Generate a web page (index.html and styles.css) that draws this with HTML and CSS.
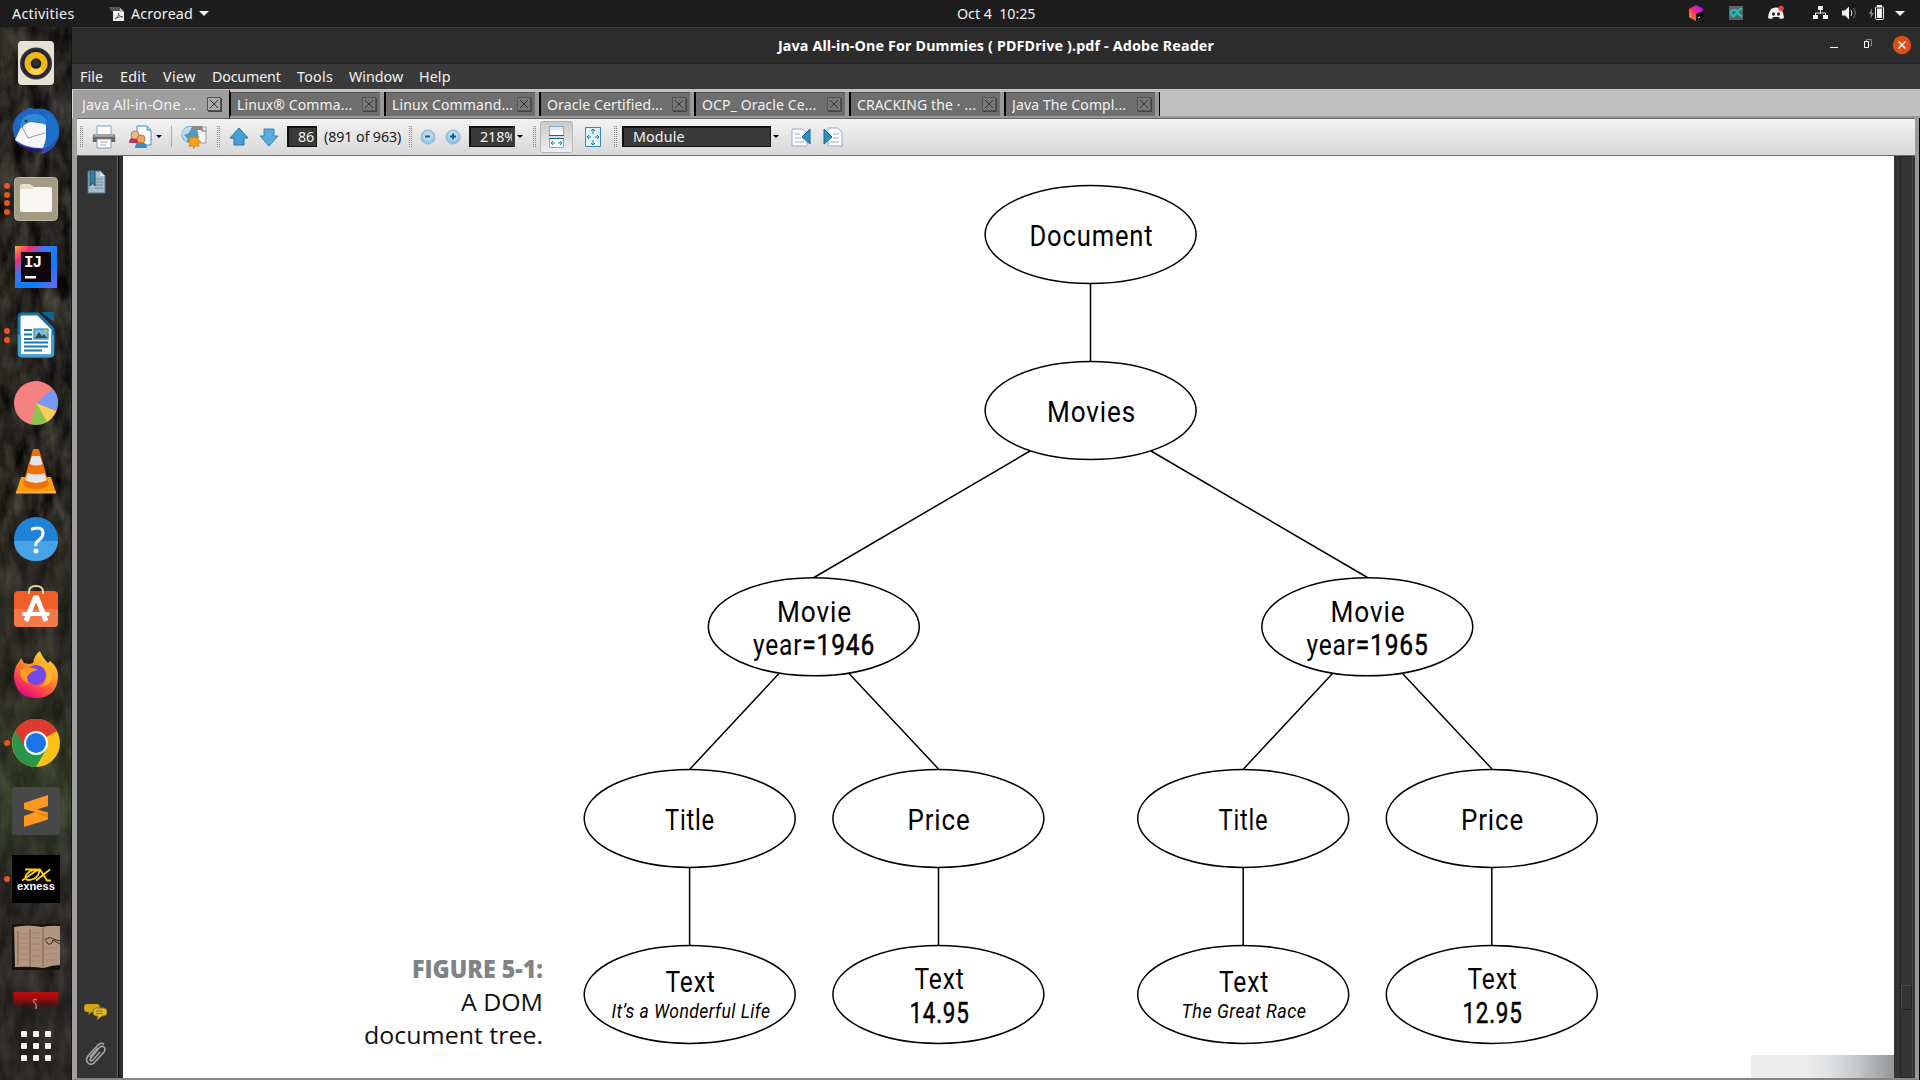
FILE: index.html
```html
<!DOCTYPE html>
<html lang="en">
<head>
<meta charset="utf-8">
<title>Java All-in-One For Dummies ( PDFDrive ).pdf - Adobe Reader</title>
<link rel="stylesheet" href="styles.css">
</head>
<body>
<div class="desktop">
  <header class="panel">
    <span class="activities">Activities</span>
    <svg class="app-icon" width="16" height="16" viewBox="0 0 16 16"><path d="M4 2h7l4 4v9H4z" fill="#f2f2f2"/><path d="M0 1h11v4H2z" fill="#555"/><path d="M11 2l4 4h-4z" fill="#bbb"/><path d="M6 13c3-2 4-4 3.500-6 0 3 2 4 4.500 4-3-.5-5 0-8 2" fill="none" stroke="#444" stroke-width=".8"/></svg>
    <span class="app-name">Acroread</span>
    <i class="caret"></i>
    <time class="clock">Oct 4&nbsp; 10:25</time>
    <svg class="tray" width="226" height="27" viewBox="1685 0 226 27">
      <defs><linearGradient id="jb" x1="0" y1="1" x2="1" y2="0"><stop offset="0" stop-color="#ffa51f"/><stop offset=".45" stop-color="#fd2f63"/><stop offset=".8" stop-color="#b01cf0"/></linearGradient></defs>
      <path d="M1696 5l7 3.500v8.500l-7 4-7-4V9z" fill="url(#jb)"/><path d="M1703 11l-7 3v7l7-4z" fill="#000"/><path d="M1698 18l2-1" stroke="#fff"/>
      <rect x="1729" y="6" width="14" height="14" fill="#626262"/><path d="M1742 9q-3-1-5 3t-4 4-2-3 3-3 4 3 4 3" stroke="#12c7c7" stroke-width="1.800" fill="none"/>
      <path d="M1771 9q5-3 10 0 3 4 3 9-2 1-4 1l-1-2h-6l-1 2q-2 0-4-1 0-5 3-9" fill="#f5f5f5"/><ellipse cx="1773.500" cy="14" rx="1.500" ry="1.800" fill="#222"/><ellipse cx="1778.500" cy="14" rx="1.500" ry="1.800" fill="#222"/><circle cx="1781" cy="8.500" r="2.700" fill="#ed4245"/>
      <path d="M1820.500 8v5m-5 4v-4h10v4" stroke="#f2f2f2" fill="none"/><path d="M1818 6h5v4h-5zm-5 9h5v4h-5zm10 0h5v4h-5z" fill="#f2f2f2"/>
      <path d="M1842 10.500h3l4-4v13l-4-4h-3z" fill="#f2f2f2"/><path d="M1851 10q2 3 0 6" stroke="#ddd" fill="none"/><path d="M1853.500 8q3.500 5 0 10" stroke="#777" fill="none"/>
      <path d="M1872 8l-3 6h2l-1 5 4-6h-2z" fill="#888"/><rect x="1875.500" y="7" width="8" height="12.500" rx="1" fill="none" stroke="#f2f2f2"/><path d="M1877 5h5v2h-5zm0 3.500h5v9.500h-5z" fill="#f2f2f2"/>
      <path d="M1895 11h10l-5 5z" fill="#f2f2f2"/>
    </svg>
  </header>
  <div class="workspace">
    <aside class="dock">
      <svg class="wallpaper" width="72" height="1053" aria-hidden="true"><filter id="bark" x="0" y="0" width="100%" height="100%" color-interpolation-filters="sRGB"><feTurbulence type="fractalNoise" baseFrequency=".07 .03" numOctaves="5" seed="8"/><feColorMatrix values=".42 .3 0 0 -.19 .42 .28 0 0 -.19 .4 .22 .06 0 -.2 0 0 0 0 1"/></filter><rect width="72" height="1053" filter="url(#bark)"/></svg>
      <ul class="apps">
        <li><svg viewBox="0 0 48 48"><rect x="6" y="2" width="36" height="44" rx="4" fill="#e6e1d5"/><circle cx="24" cy="24.500" r="16" fill="#333"/><circle cx="24" cy="24.500" r="14" fill="#222238"/><circle cx="24" cy="24.500" r="11.500" fill="#efb80f"/><path d="M17 33a11 11 0 0 0 14 0l-4-6h-6z" fill="#f8d34b"/><circle cx="24" cy="24.500" r="5.300" fill="#1c1c1c"/><circle cx="24" cy="24" r="3.500" fill="#2e2e2e"/></svg></li>
        <li><svg viewBox="0 0 48 48"><path d="M14 3Q17-1 22 2q16-3 23 11 6 15-3 26-6 7-14 8l4-5Q14 45 5 36-3 20 4 11 8 5 14 3z" fill="#1f65c4"/><path d="M5 35q7 7 25 7l-4 3Q12 45 5 35" fill="#33145f"/><path d="M3 33L12 14l22 3v18l-3 6Q16 42 3 33z" fill="#f6f6f8"/><path d="M9 18l7 13 17-5" fill="none" stroke="#999"/><path d="M8 19Q10 6 24 7q11 1 12 13-8-7-17-5-6 1-9 6z" fill="#2c8cd7"/><path d="M32 13q7 8 2 18l-3 12 3-2q14-8 12-22Q41 8 32 6q5 5 3 10" fill="#1c72ca"/><path d="M37 40q7-5 9-12-2 13-18 19l4-6" fill="#503aa5"/><circle cx="14" cy="14" r="1.500" fill="#423516"/></svg></li>
        <li class="run4"><i></i><i></i><i></i><i></i><svg viewBox="0 0 48 48"><rect x="2.500" y="2.500" width="43" height="43" rx="4" fill="#a39b83" stroke="#bbb399"/><path d="M8 16v-5q0-2 2-2h8l4 3h2v8H8z" fill="#e4dfcc"/><path d="M8 16q0-2 2-2h10l3-2h15q2 0 2 2v21q0 2-2 2H10q-2 0-2-2z" fill="#f8f7f4"/></svg></li>
        <li><svg viewBox="0 0 48 48"><defs><linearGradient id="ij" x2="1" y2="1"><stop offset="0" stop-color="#ffb038"/><stop offset=".2" stop-color="#f02b75"/><stop offset=".38" stop-color="#357bf5"/><stop offset=".65" stop-color="#087cfa"/><stop offset="1" stop-color="#7864e8"/></linearGradient></defs><rect x="3" y="3" width="42" height="42" fill="url(#ij)"/><path d="M9 9h30v30H9z" fill="#100610"/><text x="12" y="24" class="ij">IJ</text><path d="M13 33h11v2.500H13z" fill="#fff"/></svg></li>
        <li class="run2"><i></i><i></i><svg viewBox="0 0 48 48"><path d="M10 3h16l15 15v24q0 3-3 3H10q-3 0-3-3V6q0-3 3-3z" fill="#fff" stroke="#1574ab" stroke-width="3"/><path d="M7.500 24v18q0 3 3 3h27q3 0 3-3V24" fill="none" stroke="#439fce" stroke-width="3"/><path d="M29 1h13v10z" fill="#0b638f"/><path d="M12 19h8m-8 4.500h8m-8 4.500h8m-8 3.500h24m-24 4h24m-24 4h18" stroke="#1877af" stroke-width="1.800"/><rect x="22" y="18" width="14" height="10" fill="#74c1e7" stroke="#1877af"/><path d="M23 27l4-6 3 4 2-2 3 4z" fill="#444"/><path d="M32 18.500h3.500v4z" fill="#f4c20d"/></svg></li>
        <li><svg viewBox="0 0 48 48"><circle cx="24" cy="24" r="22" fill="#f58080"/><path d="M24 24L41 10q8 10 3 22z" fill="#7698ee"/><path d="M24 24l20 8q-3 7-9 11z" fill="#f7cf55"/><path d="M24 24l11 19q-7 4-16 2z" fill="#8bc34f"/></svg></li>
        <li><svg viewBox="0 0 48 48"><path d="M9 30h30l5 16H4z" fill="#ff9b0f"/><path d="M4 44h40v2.500H4z" fill="#fbb13b"/><path d="M22 2h4q1 0 1.500 2L37 37q-2 5-13 5T11 37l9.500-33Q21 2 22 2z" fill="#ee7209"/><path d="M20 9h8l2.500 8q-6 3-13 0zm-4 17q8 3 16 0l3 7q-11 6-22 0z" fill="#e5e5e7"/></svg></li>
        <li><svg viewBox="0 0 48 48"><circle cx="24" cy="24" r="22" fill="#1e83d7"/><path d="M2 26h44a22 20 0 0 1-44 0" fill="#47a3e5"/><path d="M19 14.500q12-4 12 3.500 0 4-4 7t-3 6" fill="none" stroke="#fff" stroke-width="3"/><circle cx="24" cy="36" r="2.500" fill="#fff"/></svg></li>
        <li class="raised"><svg viewBox="0 0 48 48"><rect x="2" y="9" width="44" height="36" rx="4" fill="#f15d26"/><path d="M2 27h44v14q0 4-4 4H6q-4 0-4-4z" fill="#f47a4c"/><path d="M17 12v-2q0-6 7-6t7 6v2" fill="none" stroke="#e9d59b" stroke-width="2"/><path d="M14 39l9-23h2l9 23" fill="none" stroke="#fff" stroke-width="5"/><path d="M12 32h24" stroke="#fff" stroke-width="4" stroke-linecap="round"/></svg></li>
        <li class="raised"><svg viewBox="0 0 48 48"><defs><linearGradient id="ff" x1=".8" x2=".2" y2="1"><stop stop-color="#ffe43c"/><stop offset=".4" stop-color="#ff9522"/><stop offset=".7" stop-color="#ff454b"/><stop offset="1" stop-color="#dd008e"/></linearGradient></defs><path d="M2 27Q2 17 7 12l2-4 3 5 5 1 4-1q2-9 7-12 2 6 8 12l2-2q9 7 8 17-2 20-22 20T2 27" fill="url(#ff)"/><circle cx="24" cy="25" r="10" fill="#7648e8"/><path d="M8 20q7-4 16-1l2 1q-8 1-11 7l1 6Q8 31 8 20" fill="#ff9b24"/><path d="M27 15q9 2 8 11t-8 11q15-1 13-17l-8-9z" fill="#ffb52b"/></svg></li>
        <li class="run1"><i></i><svg viewBox="0 0 48 48"><circle cx="24" cy="24" r="24" fill="#fbc116"/><path d="M24 24L3 12A24 24 0 0 1 45 12z" fill="#dd3b32"/><path d="M3.500 12A24 24 0 0 0 24 48L35 29 24 24z" fill="#279648"/><path d="M3.500 12L14 30l10-6V12z" fill="#dd3b32"/><circle cx="24" cy="24" r="12" fill="#fff"/><circle cx="24" cy="24" r="10" fill="#1b74e9"/></svg></li>
        <li><svg viewBox="0 0 48 48"><rect width="48" height="48" rx="3" fill="#484848"/><path d="M12 16l24-8v11l-11 3.500 11 3v7L12 40V29l11-4-11-3z" fill="#ff9820"/><path d="M22 25l14 2v4z" fill="#e98114"/></svg></li>
        <li class="run1"><i></i><svg viewBox="0 0 48 48"><path d="M0 0h48v48H0z"/><path d="M13 14.500h13M10 25.500L26 14.500M14 20q-2 5 2 5 7 0 10-5t-1-5q-6-1-11 5M25 14.500h3l7 11h4M24 25.500L38 14.500" fill="none" stroke="#ffd400" stroke-width="1.800"/><text x="24" y="34.500" class="exness" textLength="38" lengthAdjust="spacingAndGlyphs">exness</text></svg></li>
        <li><svg viewBox="0 0 48 48"><path d="M0 1h48v46H0z" fill="#15110e"/><path d="M2 4q14-3 28 0 9-2 18-1v39q-8 0-16 3-16-2-29-1z" fill="#b19580"/><path d="M6 8v34M18 6v38M31 5v39" stroke="#7c604e"/><path d="M8 11h9m-9 4h8m-8 5h9m-9 5h8m-8 6h9m-9 5h8M20 10h9m-9 5h8m-8 6h9m-9 6h8m-8 6h9m-9 5h8M34 25h11m-11 6h12m-12 6h11" stroke="#9c806b" stroke-dasharray="2 1"/><path d="M33 17q5-4 8-1l7 2M34 18q2 5 6 2l1-3 7 4" stroke="#3d2b22" fill="none"/></svg></li>
        <li><svg viewBox="0 0 48 48"><defs><linearGradient id="red" x2="0" y2="1"><stop stop-color="#c00d10"/><stop offset=".15" stop-color="#9f0a0c"/><stop offset=".4" stop-color="#35131200"/></linearGradient></defs><path d="M1.500 1h45v45h-45z" fill="url(#red)"/><path d="M25 9q-5-2-3 2 3 2 2 7" stroke="#b77" stroke-width="1.500" fill="none"/></svg></li>
      </ul>
      <svg class="launcher" width="30" height="30" viewBox="0 0 30 30" fill="#f3f2f0"><rect width="6" height="6" rx="1"/><rect x="12" width="6" height="6" rx="1"/><rect x="24" width="6" height="6" rx="1"/><rect y="12" width="6" height="6" rx="1"/><rect x="12" y="12" width="6" height="6" rx="1"/><rect x="24" y="12" width="6" height="6" rx="1"/><rect y="24" width="6" height="6" rx="1"/><rect x="12" y="24" width="6" height="6" rx="1"/><rect x="24" y="24" width="6" height="6" rx="1"/></svg>
    </aside>
    <main class="window">
      <div class="titlebar">
        <h1>Java All-in-One For Dummies ( PDFDrive ).pdf - Adobe Reader</h1>
        <svg class="controls" width="85" height="20" viewBox="0 0 85 20"><path d="M2 12.500h8" stroke="#fff"/><path d="M38.500 6.500v-2h5v6h-2" fill="none" stroke="#888"/><path d="M36.500 6.500h4v6h-4z" fill="none" stroke="#fff"/><circle cx="74" cy="10" r="9.200" fill="#e04e18"/><path d="M70.500 6.500l7 7m0-7l-7 7" stroke="#fff" stroke-width="1.500"/></svg>
      </div>
      <nav class="menu"><span>File</span><span>Edit</span><span>View</span><span>Document</span><span>Tools</span><span>Window</span><span>Help</span></nav>
      <div class="tabs">
        <div class="tab active"><span>Java All-in-One ...</span><b></b></div>
        <div class="tab"><span>Linux® Comma...</span><b></b></div>
        <div class="tab"><span>Linux Command...</span><b></b></div>
        <div class="tab"><span>Oracle Certified...</span><b></b></div>
        <div class="tab"><span>OCP_ Oracle Ce...</span><b></b></div>
        <div class="tab"><span>CRACKING the · ...</span><b></b></div>
        <div class="tab"><span>Java The Compl...</span><b></b></div>
      </div>
      <div class="body">
        <div class="toolbar">
          <i class="grip"></i>
          <svg class="print" width="24" height="24" viewBox="0 0 24 24"><path d="M5 1h14v10H5z" fill="#fff" stroke="#7aaab8"/><path d="M2 9h20q2 2 1 8H1q-1-6 1-8z" fill="#666"/><path d="M2 9h20v3H2z" fill="#a3a3a3"/><path d="M5 14h14v9H5z" fill="#fff" stroke="#7c9cad"/><path d="M8 17h8m-8 3h6" stroke="#aaa"/></svg>
          <svg class="people" width="23" height="24" viewBox="0 0 23 24"><path d="M8 1h10l4 4v15H8z" fill="#fff" stroke="#3f8dc0"/><path d="M18 1v4h4" fill="#bad8ee" stroke="#3f8dc0"/><path d="M0 17q1-5 6-5t5 6H0" fill="#b3365c"/><circle cx="6" cy="10" r="4" fill="#efb88f" stroke="#bd795a"/><path d="M6 23q0-6 6-6t6 6z" fill="#3c8dc5"/><circle cx="12" cy="14" r="4" fill="#f2a45e" stroke="#c07235"/></svg>
          <i class="drop"></i><i class="rule"></i>
          <svg class="globe" width="27" height="24" viewBox="0 0 27 24"><path d="M12 2h13v16H14z" fill="#f5f5f5" stroke="#999"/><path d="M21 2v4h4" fill="#ddd" stroke="#777"/><circle cx="9" cy="9.500" r="8.500" fill="#4d98c5"/><path d="M2 5q5-5 9-3l-3 6-5 2 4 4-2 3Q-1 11 2 5" fill="#b9dbe6"/><path d="M11 1h10v4H11z" fill="#888"/><path d="M13 10l1.500 3 3.500-1.500-1 3.500 3 1.500-3 1.500 1 3.500-3.500-1-1.500 3-1.500-3-3.500 1 1-3.500-3-1.500 3-1.500-1-3.500 3.500 1.500z" fill="#f6a11a" stroke="#c97505" stroke-width=".7"/></svg>
          <i class="grip g2"></i>
          <svg class="up" width="20" height="20" viewBox="0 0 20 20"><path d="M10 1l9 10h-4v7H5v-7H1z" fill="#46a0d8" stroke="#2372aa"/></svg>
          <svg class="down" width="20" height="20" viewBox="0 0 20 20"><path d="M10 19l9-10h-4V2H5v7H1z" fill="#57abdd" stroke="#3a81b1"/></svg>
          <span class="field page-no">86</span><span class="total">(891 of 963)</span>
          <i class="grip g3"></i>
          <svg class="minus" width="16" height="16" viewBox="0 0 16 16"><circle cx="8" cy="8" r="7" fill="#93c6e4" stroke="#9ab6c6"/><circle cx="8" cy="7" r="5" fill="#b8dcef"/><path d="M5 7.500h5" stroke="#155f99" stroke-width="2"/></svg>
          <svg class="plus" width="16" height="16" viewBox="0 0 16 16"><circle cx="8" cy="8" r="7" fill="#93c6e4" stroke="#9ab6c6"/><circle cx="8" cy="7" r="5" fill="#b8dcef"/><path d="M5 7.500h6m-3-3v6" stroke="#155f99" stroke-width="2"/></svg>
          <span class="field zoom-level">218%</span><i class="drop d2"></i>
          <i class="grip g4"></i>
          <span class="pressed"><svg width="17" height="22" viewBox="0 0 17 22"><path d="M1.500.5h14v9h-14zM1.500 12.500h14v9h-14z" fill="#fff" stroke="#7fabc8"/><path d="M2 1h13v3H2z" fill="#d8edf7"/><path d="M1 9.500h15M1 12.500h15" stroke="#16669c"/><path d="M3 17h4m3 0h4M5 15l-2 2 2 2m7-4l2 2-2 2" fill="none" stroke="#187bb6"/></svg></span>
          <svg class="fit" width="18" height="22" viewBox="0 0 18 22"><path d="M1.500 1.500h15v19h-15z" fill="#e3f3fa" stroke="#3f87b2"/><path d="M9 3v5m0 6v5M3 11h4m4 0h4M7 5l2-2 2 2M7 17l2 2 2-2M5 9l-2 2 2 2m8-4l2 2-2 2" fill="none" stroke="#187bb6"/></svg>
          <i class="grip g5"></i>
          <span class="field search">Module</span><i class="drop d3"></i>
          <svg class="prev" width="21" height="20" viewBox="0 0 21 20"><path d="M1 2h10l5 4v13H1z" fill="#fafcff" stroke="#94a9d3"/><path d="M4 7h5m-5 4h6m-6 4h9" stroke="#aaa"/><path d="M19 2v15l-8-7z" fill="#2e8fc1" stroke="#176492"/></svg>
          <svg class="next" width="21" height="20" viewBox="0 0 21 20"><path d="M5 1h10l4 4v14H5z" fill="#fafcff" stroke="#94a9d3"/><path d="M10 7h6m-6 4h6m-8 4h8" stroke="#aaa"/><path d="M1 2v15l8-7z" fill="#2e8fc1" stroke="#176492"/></svg>
        </div>
        <div class="viewer">
          <div class="side">
            <svg width="19" height="24" viewBox="0 0 19 24"><path d="M1 1h12l5 5v17H1z" fill="#a8bccb" stroke="#56798e"/><path d="M13 1v5h5" fill="#dde7ed"/><path d="M8 9h8m-8 3h8m-8 3h8m-8 3h8" stroke="#718da1"/><path d="M3 0h5v16l-2.500-3L3 16z" fill="#417da0" stroke="#1f5271"/></svg>
            <svg class="comments" width="24" height="18" viewBox="0 0 24 18"><path d="M3 1h10q3 0 3 4t-3 4H8l-4 3 1-3H3Q0 9 0 5t3-4" fill="#d1a515"/><path d="M12 5h8q3 0 3 4t-3 4h-2l-5 4 1-4h-2q-3 0-3-4t3-4" fill="#e3bb2e" stroke="#8c6b0b"/><path d="M12 8h7m-7 2.500h7" stroke="#937014"/></svg>
            <svg class="clip" width="22" height="24" viewBox="0 0 22 24"><path d="M5 17L14 6q3-3 5-1t0 5L10 20q-4 4-7 1t0-7L13 3q3-3 6-1M5 15l8-9m-8 11q0 3 3 1l7-8" fill="none" stroke="#a7a7a7" stroke-width="1.600"/></svg>
          </div>
          <div class="gutter"></div>
          <div class="page">
            <svg class="tree" width="1771" height="922" viewBox="123 156 1771 922">
              <g class="edges"><path d="M1090.500 283.500v78M1030 451L814 577.500M1151 451l216.500 126.500M779 673.500L690 769M849 673.500l89.500 95.500M1332.500 673.500L1243.500 769M1402.500 673.500L1492 769M689.600 867.500v78M938.500 867.500v78M1243.200 867.500v78M1491.800 867.500v78"/></g>
              <g class="nodes">
                <ellipse cx="1090.600" cy="234.500" rx="105.500" ry="49"/><ellipse cx="1090.600" cy="410.500" rx="105.500" ry="49"/>
                <ellipse cx="813.800" cy="626.800" rx="105.500" ry="49"/><ellipse cx="1367.300" cy="626.800" rx="105.500" ry="49"/>
                <ellipse cx="689.700" cy="818.400" rx="105.500" ry="49"/><ellipse cx="938.400" cy="818.400" rx="105.500" ry="49"/><ellipse cx="1243.200" cy="818.400" rx="105.500" ry="49"/><ellipse cx="1491.800" cy="818.400" rx="105.500" ry="49"/>
                <ellipse cx="689.700" cy="994.400" rx="105.500" ry="49"/><ellipse cx="938.400" cy="994.400" rx="105.500" ry="49"/><ellipse cx="1243.200" cy="994.400" rx="105.500" ry="49"/><ellipse cx="1491.800" cy="994.400" rx="105.500" ry="49"/>
              </g>
              <g class="labels">
                <text x="1091.500" y="245.500" textLength="124" lengthAdjust="spacingAndGlyphs">Document</text>
                <text x="1091.500" y="421.500" textLength="89" lengthAdjust="spacingAndGlyphs">Movies</text>
                <text x="814.500" y="621.500" textLength="75" lengthAdjust="spacingAndGlyphs">Movie</text>
                <text x="814" y="655" textLength="122" lengthAdjust="spacingAndGlyphs">year<tspan class="num">=1946</tspan></text>
                <text x="1368" y="621.500" textLength="75" lengthAdjust="spacingAndGlyphs">Movie</text>
                <text x="1367.500" y="655" textLength="122" lengthAdjust="spacingAndGlyphs">year<tspan class="num">=1965</tspan></text>
                <text x="690" y="829.500" textLength="50" lengthAdjust="spacingAndGlyphs">Title</text><text x="939" y="829.500" textLength="63" lengthAdjust="spacingAndGlyphs">Price</text>
                <text x="1243.500" y="829.500" textLength="50" lengthAdjust="spacingAndGlyphs">Title</text><text x="1492.500" y="829.500" textLength="63" lengthAdjust="spacingAndGlyphs">Price</text>
                <text x="690.500" y="992" textLength="50" lengthAdjust="spacingAndGlyphs">Text</text><text x="939.500" y="989" textLength="50" lengthAdjust="spacingAndGlyphs">Text</text>
                <text x="1244" y="992" textLength="50" lengthAdjust="spacingAndGlyphs">Text</text><text x="1492.500" y="989" textLength="50" lengthAdjust="spacingAndGlyphs">Text</text>
                <text x="939.500" y="1022.500" textLength="60" lengthAdjust="spacingAndGlyphs" class="num">14.95</text><text x="1492.500" y="1022.500" textLength="60" lengthAdjust="spacingAndGlyphs" class="num">12.95</text>
                <text x="691" y="1017.500" textLength="159" lengthAdjust="spacingAndGlyphs" class="movie">It’s a Wonderful Life</text>
                <text x="1244" y="1017.500" textLength="125" lengthAdjust="spacingAndGlyphs" class="movie">The Great Race</text>
              </g>
              <g class="caption"><text x="543" y="978" textLength="131" lengthAdjust="spacingAndGlyphs" class="fig">FIGURE 5-1:</text><text x="543" y="1011" textLength="82" lengthAdjust="spacingAndGlyphs">A DOM</text><text x="543" y="1044" textLength="179" lengthAdjust="spacingAndGlyphs">document tree.</text></g>
            </svg>
            <div class="fade"></div>
          </div>
          <div class="scroll"><div class="track"><div class="thumb"></div></div></div>
        </div>
      </div>
    </main>
  </div>
</div>
</body>
</html>
```
FILE: styles.css
```css
* { box-sizing: border-box; }
body { margin: 0; width: 1920px; height: 1080px; overflow: hidden; font: 14.3px "Noto Sans", sans-serif; color: #f2f2f2; }
svg { display: block; flex: none; }
.desktop { display: flex; flex-direction: column; height: 1080px; background: #1d1d1d; }
.panel { position: relative; display: flex; align-items: center; height: 27px; flex: none; background: #1d1d1d; padding-left: 12px; white-space: nowrap; }
.activities { width: 97px; letter-spacing: .3px; }
.app-name { margin-left: 6px; width: 63px; letter-spacing: .15px; }
.caret { margin-left: 5px; border: 5px solid transparent; border-top-color: #f2f2f2; border-bottom: 0; }
.clock { position: absolute; left: 957px; letter-spacing: -.05px; }
.tray { margin-left: auto; margin-right: 9px; }
.workspace { display: flex; flex: 1; min-height: 0; }
.dock { position: relative; width: 72px; flex: none; background: #292720; overflow: hidden; border-right: 1px solid #171512; }
.wallpaper { position: absolute; inset: 0; }
.dock::before { content: ""; position: absolute; z-index: 1; inset: 0; background: linear-gradient(#1a1a1c44 0, #1e1b1740 500px, #33302b90 560px, #2b291f80 650px, #3a472a99 740px, #33402899 800px, #2d292899 860px, #28242499 100%); }
.apps { position: relative; z-index: 2; list-style: none; margin: 0; padding: 2px 0 0; height: 983px; overflow: hidden; }
.apps li { position: relative; height: 68px; display: flex; align-items: center; justify-content: center; }
.apps .raised { padding-bottom: 3px; }
.apps svg { width: 48px; height: 48px; }
.apps i { position: absolute; left: 4px; top: 31px; width: 6px; height: 6px; border-radius: 50%; background: #e95420; }
.run2 i:nth-child(1) { top: 27px; }
.run2 i:nth-child(2) { top: 36px; }
.run4 i:nth-child(1) { top: 18px; }
.run4 i:nth-child(2) { top: 27px; }
.run4 i:nth-child(3) { top: 35px; }
.run4 i:nth-child(4) { top: 44px; }
.launcher { position: relative; z-index: 2; margin: 21px 0 0 21px; }
.ij { font: bold 16px "Liberation Mono", monospace; fill: #fff; letter-spacing: -1px; }
.exness { font: bold 10px "Liberation Sans", sans-serif; fill: #fff; text-anchor: middle; }
.window { display: flex; flex-direction: column; flex: 1; min-width: 0; background: #c0c0c0; }
.titlebar { position: relative; display: flex; align-items: center; justify-content: center; height: 37px; flex: none; background: #2c2c2c; border-top: 1px solid #3d3d3d; border-bottom: 1px solid #252525; }
.titlebar h1 { margin: 0; font-size: 14.3px; font-weight: 700; white-space: nowrap; letter-spacing: .15px; color: #fff; }
.controls { position: absolute; right: 7px; top: 7px; }
.menu { display: flex; height: 25px; flex: none; background: #3a3a3a; padding-left: 8px; line-height: 25px; }
.menu span { width: 67px; letter-spacing: .1px; }
.menu span:nth-child(1) { width: 40px; }
.menu span:nth-child(2) { width: 43px; letter-spacing: .3px; }
.menu span:nth-child(3) { width: 49px; letter-spacing: .4px; }
.menu span:nth-child(4) { width: 85px; letter-spacing: -.2px; }
.menu span:nth-child(5) { width: 52px; letter-spacing: .25px; }
.menu span:nth-child(6) { width: 70px; letter-spacing: 0; }
.tabs { display: flex; height: 29px; flex: none; background: #c0c0c0; padding-top: 3px; border-bottom: 2px solid #999; }
.tab { display: flex; align-items: center; width: 155px; height: 24px; background: #6e6e6e; border-right: 1px solid #000; border-left: 1px solid #000; padding-left: 6px; box-shadow: inset -4px 0 #999, inset 0 1px #555; font-size: 14px; letter-spacing: .12px; white-space: nowrap; }
.tab span { width: 125px; overflow: hidden; }
.tab b { width: 14px; height: 14px; border: 1px solid #555; box-shadow: 1px 1px #444; background: linear-gradient(45deg, transparent 45%, #333 45% 55%, transparent 55%) center / 8px 8px no-repeat, linear-gradient(-45deg, transparent 45%, #333 45% 55%, transparent 55%) center / 8px 8px no-repeat, #777; }
.tab.active { width: 158px; height: 29px; margin-top: -2px; background: #9e9e9e; box-shadow: none; border-left: 1px solid #d9d9d9; padding: 0 0 1px 9px; letter-spacing: .22px; }
.tab.active b { background-color: #aaa; }
.body { display: flex; flex-direction: column; flex: 1; min-height: 0; border-style: solid; border-color: #d0d0d0 #999 #858585 #a0a0a0; border-width: 0 4px 2px 5px; margin-right: 1px; outline: 1px solid #000; outline-offset: 0; clip-path: inset(0 -1px 0 0); }
.toolbar { display: flex; align-items: center; height: 38px; flex: none; background: linear-gradient(#f2f2f2, #d8d8d8); border-top: 1px solid #666; border-bottom: 1px solid #6c6c6c; padding: 0 0 1px 3px; color: #1a1a1a; }
.toolbar > * { flex: none; }
.grip { width: 3px; height: 21px; background: repeating-linear-gradient(transparent 0 1px, #e3e3e3 1px 2px), repeating-linear-gradient(90deg, #888 0 1px, #e3e3e3 1px 2px); }
.print { margin-left: 9px; }
.people { margin-left: 13px; }
.drop { margin-left: 4px; border: 3px solid transparent; border-top-color: #000; border-bottom: 0; }
.rule { width: 1px; height: 21px; margin-left: 9px; background: #aaa; }
.globe { margin-left: 9px; }
.g2 { margin-left: 9px; }
.up { margin-left: 9px; }
.down { margin-left: 10px; }
.field { height: 21px; background: #3a3a3a; border: 1px solid #111; border-width: 2px 1px 1px 2px; color: #f2f2f2; line-height: 18px; overflow: hidden; white-space: nowrap; }
.page-no { width: 30px; margin-left: 8px; padding-left: 9px; letter-spacing: -.3px; }
.total { width: 78px; margin-left: 7px; letter-spacing: -.12px; white-space: nowrap; }
.g3 { margin-left: 7px; }
.minus { margin-left: 8px; }
.plus { margin-left: 9px; }
.zoom-level { width: 46px; margin-left: 8px; padding-left: 9px; letter-spacing: -.1px; border-right: 3px solid #3a3a3a; }
.d2, .d3 { margin-left: 2px; }
.g4 { margin-left: 10px; }
.pressed { display: flex; align-items: center; justify-content: center; width: 33px; height: 32px; margin-left: 4px; border: 1px solid #b6b6b6; border-radius: 3px; background: linear-gradient(#c9c9c9, #eee); }
.fit { margin-left: 11px; }
.g5 { margin-left: 12px; }
.search { width: 149px; margin-left: 5px; padding-left: 9px; letter-spacing: .1px; }
.prev { margin-left: 12px; }
.next { margin-left: 11px; }
.viewer { display: flex; flex: 1; min-height: 0; }
.side { display: flex; flex-direction: column; align-items: center; width: 41px; flex: none; background: #333; padding: 14px 2px 12px 0; border-right: 1px solid #666; }
.comments { margin-top: auto; margin-bottom: 21px; }
.gutter { width: 5px; flex: none; background: #2d2d2d; border-left: 1px solid #000; }
.page { position: relative; width: 1771px; flex: none; background: #fff; }
.edges, .nodes { fill: none; stroke: #000; stroke-width: 1.500; }
.labels { font: 30px Roboto, sans-serif; letter-spacing: 1px; fill: #000; text-anchor: middle; }
.num { stroke: #000; stroke-width: .5; }
.movie { font-size: 20px; font-style: italic; letter-spacing: .5px; }
.caption { font: 24.500px "Open Sans", sans-serif; fill: #111; text-anchor: end; }
.fig { font-weight: 800; fill: #808285; }
.fade { position: absolute; right: 0; bottom: 0; width: 143px; height: 23px; background: linear-gradient(90deg, #ececec 38%, #e2e4e5 52%, #c5c6c7 75%, #939599); }
.scroll { flex: 1; background: #333; padding-left: 6px; }
.track { display: flex; flex-direction: column; width: 13px; height: 100%; border: 1px solid #252525; border-right-color: #484848; padding-top: 828px; }
.thumb { width: 11px; height: 25px; background: #353535; border: 1px solid #4a4a4a; border-right-color: #222; border-bottom-color: #222; }
```
